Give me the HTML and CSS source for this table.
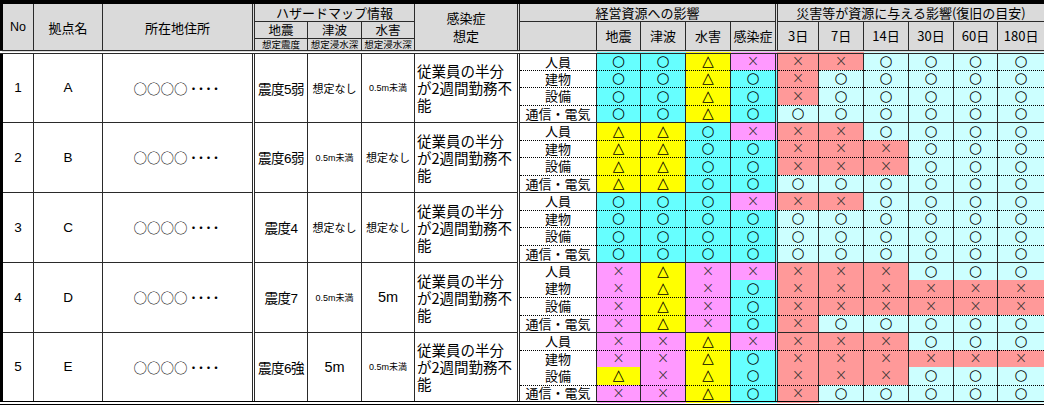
FILE: index.html
```html
<!DOCTYPE html>
<html lang="ja">
<head>
<meta charset="utf-8">
<title>拠点別影響評価</title>
<link rel="stylesheet" href="styles.css">
</head>
<body>
<table class="sheet">
<colgroup>
<col class="w-no"><col class="w-name"><col class="w-addr">
<col class="w-hz1"><col class="w-hz2"><col class="w-hz3"><col class="w-inf">
<col class="w-lbl"><col class="w-rs1"><col class="w-rs2"><col class="w-rs3"><col class="w-rs4">
<col class="w-d3"><col class="w-d7"><col class="w-d14"><col class="w-d30"><col class="w-d60"><col class="w-d180">
</colgroup>
<thead>
<tr class="h1">
<th rowspan="3" class="no">No</th>
<th rowspan="3">拠点名</th>
<th rowspan="3">所在地住所</th>
<th colspan="3" class="dl">ハザードマップ情報</th>
<th rowspan="3" class="infh">感染症<br>想定</th>
<th colspan="5" class="dl">経営資源への影響</th>
<th colspan="6" class="dl">災害等が資源に与える影響(復旧の目安)</th>
</tr>
<tr class="h2">
<th class="dl hz">地震</th><th class="hz">津波</th><th class="hz">水害</th>
<th rowspan="2" class="dl"></th>
<th rowspan="2">地震</th><th rowspan="2">津波</th><th rowspan="2">水害</th><th rowspan="2">感染症</th>
<th rowspan="2" class="dl">3日</th><th rowspan="2">7日</th><th rowspan="2">14日</th><th rowspan="2">30日</th><th rowspan="2">60日</th><th rowspan="2">180日</th>
</tr>
<tr class="h3">
<th class="dl sm">想定震度</th><th class="sm">想定浸水深</th><th class="sm">想定浸水深</th>
</tr>
</thead>

<tbody class="site first">
<tr class="r1">
<td rowspan="4" class="num">1</td><td rowspan="4" class="num">A</td><td rowspan="4" class="addr">○○○○<span class="dots">・・・・</span></td>
<td rowspan="4" class="dl v">震度5弱</td><td rowspan="4" class="v sm2">想定なし</td><td rowspan="4" class="v xs">0.5m未満</td>
<td rowspan="4" class="inf">従業員の半分が2週間勤務不能</td>
<td class="lbl dl">人員</td><td class="s c">○</td><td class="s c">○</td><td class="s y">△</td><td class="s x p">×</td>
<td class="s x dl r">×</td><td class="s x r">×</td><td class="s lc">○</td><td class="s lc">○</td><td class="s lc">○</td><td class="s lc">○</td>
</tr>
<tr class="r2">
<td class="lbl dl">建物</td><td class="s c">○</td><td class="s c">○</td><td class="s y">△</td><td class="s c">○</td>
<td class="s x dl r">×</td><td class="s lc">○</td><td class="s lc">○</td><td class="s lc">○</td><td class="s lc">○</td><td class="s lc">○</td>
</tr>
<tr class="r3">
<td class="lbl dl">設備</td><td class="s c">○</td><td class="s c">○</td><td class="s y">△</td><td class="s c">○</td>
<td class="s x dl r">×</td><td class="s lc">○</td><td class="s lc">○</td><td class="s lc">○</td><td class="s lc">○</td><td class="s lc">○</td>
</tr>
<tr class="r4">
<td class="lbl dl">通信・電気</td><td class="s c">○</td><td class="s c">○</td><td class="s y">△</td><td class="s c">○</td>
<td class="s dl lc">○</td><td class="s lc">○</td><td class="s lc">○</td><td class="s lc">○</td><td class="s lc">○</td><td class="s lc">○</td>
</tr>
</tbody>

<tbody class="site">
<tr class="r1">
<td rowspan="4" class="num">2</td><td rowspan="4" class="num">B</td><td rowspan="4" class="addr">○○○○<span class="dots">・・・・</span></td>
<td rowspan="4" class="dl v">震度6弱</td><td rowspan="4" class="v xs">0.5m未満</td><td rowspan="4" class="v sm2">想定なし</td>
<td rowspan="4" class="inf">従業員の半分が2週間勤務不能</td>
<td class="lbl dl">人員</td><td class="s y">△</td><td class="s y">△</td><td class="s c">○</td><td class="s x p">×</td>
<td class="s x dl r">×</td><td class="s x r">×</td><td class="s lc">○</td><td class="s lc">○</td><td class="s lc">○</td><td class="s lc">○</td>
</tr>
<tr class="r2">
<td class="lbl dl">建物</td><td class="s y">△</td><td class="s y">△</td><td class="s c">○</td><td class="s c">○</td>
<td class="s x dl r">×</td><td class="s x r">×</td><td class="s x r">×</td><td class="s lc">○</td><td class="s lc">○</td><td class="s lc">○</td>
</tr>
<tr class="r3">
<td class="lbl dl">設備</td><td class="s y">△</td><td class="s y">△</td><td class="s c">○</td><td class="s c">○</td>
<td class="s x dl r">×</td><td class="s x r">×</td><td class="s x r">×</td><td class="s lc">○</td><td class="s lc">○</td><td class="s lc">○</td>
</tr>
<tr class="r4">
<td class="lbl dl">通信・電気</td><td class="s y">△</td><td class="s y">△</td><td class="s c">○</td><td class="s c">○</td>
<td class="s dl lc">○</td><td class="s lc">○</td><td class="s lc">○</td><td class="s lc">○</td><td class="s lc">○</td><td class="s lc">○</td>
</tr>
</tbody>

<tbody class="site">
<tr class="r1">
<td rowspan="4" class="num">3</td><td rowspan="4" class="num">C</td><td rowspan="4" class="addr">○○○○<span class="dots">・・・・</span></td>
<td rowspan="4" class="dl v">震度4</td><td rowspan="4" class="v sm2">想定なし</td><td rowspan="4" class="v sm2">想定なし</td>
<td rowspan="4" class="inf">従業員の半分が2週間勤務不能</td>
<td class="lbl dl">人員</td><td class="s c">○</td><td class="s c">○</td><td class="s c">○</td><td class="s x p">×</td>
<td class="s x dl r">×</td><td class="s x r">×</td><td class="s lc">○</td><td class="s lc">○</td><td class="s lc">○</td><td class="s lc">○</td>
</tr>
<tr class="r2">
<td class="lbl dl">建物</td><td class="s c">○</td><td class="s c">○</td><td class="s c">○</td><td class="s c">○</td>
<td class="s dl lc">○</td><td class="s lc">○</td><td class="s lc">○</td><td class="s lc">○</td><td class="s lc">○</td><td class="s lc">○</td>
</tr>
<tr class="r3">
<td class="lbl dl">設備</td><td class="s c">○</td><td class="s c">○</td><td class="s c">○</td><td class="s c">○</td>
<td class="s dl lc">○</td><td class="s lc">○</td><td class="s lc">○</td><td class="s lc">○</td><td class="s lc">○</td><td class="s lc">○</td>
</tr>
<tr class="r4">
<td class="lbl dl">通信・電気</td><td class="s c">○</td><td class="s c">○</td><td class="s c">○</td><td class="s c">○</td>
<td class="s dl lc">○</td><td class="s lc">○</td><td class="s lc">○</td><td class="s lc">○</td><td class="s lc">○</td><td class="s lc">○</td>
</tr>
</tbody>

<tbody class="site">
<tr class="r1 nb">
<td rowspan="4" class="num">4</td><td rowspan="4" class="num">D</td><td rowspan="4" class="addr">○○○○<span class="dots">・・・・</span></td>
<td rowspan="4" class="dl v">震度7</td><td rowspan="4" class="v xs">0.5m未満</td><td rowspan="4" class="v num">5m</td>
<td rowspan="4" class="inf">従業員の半分が2週間勤務不能</td>
<td class="lbl dl">人員</td><td class="s x p">×</td><td class="s y">△</td><td class="s x p">×</td><td class="s x p">×</td>
<td class="s x dl r">×</td><td class="s x r">×</td><td class="s x r">×</td><td class="s lc">○</td><td class="s lc">○</td><td class="s lc">○</td>
</tr>
<tr class="r2">
<td class="lbl dl">建物</td><td class="s x p">×</td><td class="s y">△</td><td class="s x p">×</td><td class="s c">○</td>
<td class="s x dl r">×</td><td class="s x r">×</td><td class="s x r">×</td><td class="s x r">×</td><td class="s x r">×</td><td class="s x r">×</td>
</tr>
<tr class="r3">
<td class="lbl dl">設備</td><td class="s x p">×</td><td class="s y">△</td><td class="s x p">×</td><td class="s c">○</td>
<td class="s x dl r">×</td><td class="s x r">×</td><td class="s x r">×</td><td class="s x r">×</td><td class="s x r">×</td><td class="s x r">×</td>
</tr>
<tr class="r4">
<td class="lbl dl">通信・電気</td><td class="s x p">×</td><td class="s y">△</td><td class="s x p">×</td><td class="s c">○</td>
<td class="s x dl r">×</td><td class="s lc">○</td><td class="s lc">○</td><td class="s lc">○</td><td class="s lc">○</td><td class="s lc">○</td>
</tr>
</tbody>

<tbody class="site last">
<tr class="r1">
<td rowspan="4" class="num">5</td><td rowspan="4" class="num">E</td><td rowspan="4" class="addr">○○○○<span class="dots">・・・・</span></td>
<td rowspan="4" class="dl v">震度6強</td><td rowspan="4" class="v num">5m</td><td rowspan="4" class="v xs">0.5m未満</td>
<td rowspan="4" class="inf">従業員の半分が2週間勤務不能</td>
<td class="lbl dl">人員</td><td class="s x p">×</td><td class="s x p">×</td><td class="s y">△</td><td class="s x p">×</td>
<td class="s x dl r">×</td><td class="s x r">×</td><td class="s x r">×</td><td class="s lc">○</td><td class="s lc">○</td><td class="s lc">○</td>
</tr>
<tr class="r2 nb">
<td class="lbl dl">建物</td><td class="s x p">×</td><td class="s x p">×</td><td class="s y">△</td><td class="s c">○</td>
<td class="s x dl r">×</td><td class="s x r">×</td><td class="s x r">×</td><td class="s x r">×</td><td class="s x r">×</td><td class="s x r">×</td>
</tr>
<tr class="r3">
<td class="lbl dl">設備</td><td class="s y">△</td><td class="s x p">×</td><td class="s y">△</td><td class="s c">○</td>
<td class="s x dl r">×</td><td class="s x r">×</td><td class="s x r">×</td><td class="s lc">○</td><td class="s lc">○</td><td class="s lc">○</td>
</tr>
<tr class="r4">
<td class="lbl dl">通信・電気</td><td class="s x p">×</td><td class="s x p">×</td><td class="s y">△</td><td class="s c">○</td>
<td class="s x dl r">×</td><td class="s lc">○</td><td class="s lc">○</td><td class="s lc">○</td><td class="s lc">○</td><td class="s lc">○</td>
</tr>
</tbody>
</table>
</body>
</html>
```

FILE: styles.css
```css
* { box-sizing: border-box; }

body {
  margin: 0;
  background: #ffffff;
}

.sheet {
  border-collapse: collapse;
  table-layout: fixed;
  width: 1044px;
  font-family: "Liberation Sans", "Noto Sans CJK JP", sans-serif;
  color: #000;
  border-top: 4px solid #000;
  border-left: 3px solid #000;
  border-right: 3px double #000;
  border-bottom: 4px double #000;
}

.w-no { width: 32px; }
.w-name { width: 69px; }
.w-addr { width: 151px; }
.w-hz1 { width: 54px; }
.w-hz2 { width: 54px; }
.w-hz3 { width: 53px; }
.w-inf { width: 104px; }
.w-lbl { width: 78px; }
.w-rs1 { width: 44px; }
.w-rs2 { width: 45px; }
.w-rs3 { width: 45px; }
.w-rs4 { width: 46px; }
.w-d3 { width: 42px; }
.w-d7 { width: 45px; }
.w-d14 { width: 45px; }
.w-d30 { width: 45px; }
.w-d60 { width: 44px; }
.w-d180 { width: 48px; }

.sheet th,
.sheet td {
  border: 1px solid #2a2a2a;
  padding: 0;
  text-align: center;
  vertical-align: middle;
  white-space: nowrap;
}

.sheet th {
  background: #dadada;
  font-family: "Noto Sans CJK JP", sans-serif;
  font-weight: normal;
  font-size: 13px;
  line-height: 15px;
}

.sheet th.no {
  font-family: "Liberation Sans", sans-serif;
  font-size: 12.5px;
}

.sheet th.hz { font-size: 12.5px; }

.sheet th.sm {
  font-size: 9.5px;
  line-height: 11px;
}

.sheet th.infh {
  font-size: 13px;
  line-height: 18px;
}

.h1 { height: 19px; }
.h2 { height: 17px; }
.h3 { height: 14px; }

.sheet .dl { border-left: 3px double #2a2a2a; }

.site.first tr.r1 td { border-top: 4px double #2a2a2a; }

.r1, .r3 { height: 18px; }
.r2, .r4 { height: 17px; }

.sheet td.num {
  font-size: 13.5px;
}

.sheet td.addr {
  font-family: "Noto Sans CJK JP", sans-serif;
  font-size: 13.5px;
}

.dots {
  font-size: 12px;
  letter-spacing: -4.5px;
  padding-right: 4px;
}

.sheet td.v {
  font-family: "Liberation Sans", "Noto Sans CJK JP", sans-serif;
  font-size: 13.5px;
  letter-spacing: -0.5px;
}

.sheet td.v.sm2 { font-size: 11px; letter-spacing: 0; }
.sheet td.v.xs { font-size: 9px; letter-spacing: 0; }
.sheet td.v.num { font-size: 14.5px; letter-spacing: 0; }

.sheet td.inf {
  font-family: "Noto Sans CJK JP", sans-serif;
  font-size: 14.5px;
  line-height: 17px;
  text-align: left;
  padding-left: 2px;
  white-space: normal;
  word-break: break-all;
}

.sheet td.lbl {
  font-family: "Noto Sans CJK JP", sans-serif;
  font-size: 13px;
  line-height: 14px;
}

.sheet td.s {
  font-family: "DejaVu Sans", sans-serif;
  font-size: 15px;
  line-height: 15px;
}

.sheet td.s.x {
  font-weight: 200;
  color: #333;
}

.site td.lbl,
.site td.s {
  border-top: 1px dotted #000;
  border-bottom: 1px dotted #000;
}

.site tr.r1 td.lbl,
.site tr.r1 td.s { border-top: 1px solid #2a2a2a; }

.site tr.r4 td.lbl,
.site tr.r4 td.s { border-bottom: 1px solid #2a2a2a; }

.site tr.nb td.lbl,
.site tr.nb td.s { border-bottom-style: hidden; }

.site.first tr.r1 td.lbl,
.site.first tr.r1 td.s { border-top: 4px double #2a2a2a; }

.site td.dl { border-left: 3px double #2a2a2a; }

.c { background: #66ffff; }
.y { background: #ffff00; }
.p { background: #ff99ff; }
.lc { background: #ccffff; }
.r { background: #ff9999; }
```
